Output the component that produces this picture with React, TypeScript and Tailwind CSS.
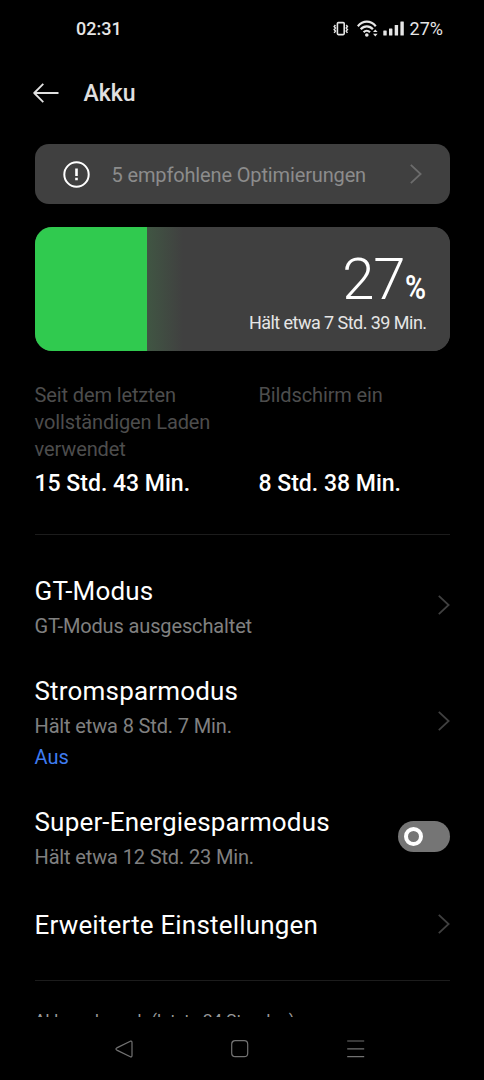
import type { ReactNode } from 'react';

interface ChevronProps {
  className?: string;
}

function Chevron({ className = '-mt-1 text-[#404040]' }: ChevronProps) {
  return (
    <svg className={`w-3 h-5 shrink-0 ${className}`} fill="none" stroke="currentColor" viewBox="0 0 12 20">
      <path strokeWidth={1.8} d="M0.8 0.9L10.6 10L0.8 19.1" />
    </svg>
  );
}

function StatusBar() {
  return (
    <div className="flex items-center justify-between h-[57px] pl-[76px] pr-[41px] text-[18px] font-medium text-[#e6e6e6] shrink-0">
      <span>02:31</span>
      <div className="flex items-center">
        {/* Vibration */}
        <svg className="w-4 h-4" fill="none" stroke="currentColor" viewBox="0 0 16 16">
          <rect x="4.4" y="1.6" width="6.8" height="12" rx="1" strokeWidth={1.6} />
          <path strokeWidth={1.5} d="M2.4 4L1.2 5.5L2.4 7L1.2 8.5L2.4 10L1.2 11.8M13.2 4L14.4 5.5L13.2 7L14.4 8.5L13.2 10L14.4 11.8" />
        </svg>
        {/* Wi-Fi */}
        <svg className="w-[22px] h-[18px] ml-2" fill="none" stroke="currentColor" viewBox="0 0 22 18">
          <path strokeWidth={2.2} d="M0.8 6.2C6 0.2 13.6 0.2 18.8 6.2M3.7 9.3C7.2 5.4 12.4 5.4 15.9 9.3M6.6 12.3C8.6 10.2 11 10.2 13 12.3" />
          <circle cx="9.8" cy="15" r="1.8" fill="currentColor" stroke="none" />
          <path fill="currentColor" stroke="none" d="M16 12L18.3 9.4L20.6 12ZM16 13.8L18.3 16.4L20.6 13.8Z" />
        </svg>
        {/* Signal */}
        <svg className="w-[22px] h-4 ml-1" fill="currentColor" viewBox="0 0 22 16">
          <rect x="0.3" y="9.5" width="3.4" height="5" rx="0.5" />
          <rect x="6" y="7.5" width="3.4" height="7" rx="0.5" />
          <rect x="11.7" y="4" width="3.4" height="10.5" rx="0.5" />
          <rect x="17.4" y="0.5" width="3.4" height="14" rx="0.5" />
        </svg>
        <span className="ml-[5px] font-normal">27%</span>
      </div>
    </div>
  );
}

interface UsageStatProps {
  label: string;
  value: string;
}

function UsageStat({ label, value }: UsageStatProps) {
  return (
    <div className="flex flex-col justify-between">
      <span className="text-[20px] leading-[27px] tracking-[-0.12px] text-[#4d4d4d]">{label}</span>
      <span className="mt-[6px] text-[23px] leading-[30px] font-medium text-white">{value}</span>
    </div>
  );
}

interface SettingRowProps {
  title: string;
  subtitle?: string;
  status?: string;
  children: ReactNode;
}

function SettingRow({ title, subtitle, status, children }: SettingRowProps) {
  return (
    <div className="flex items-center justify-between py-[17px]">
      <div className="flex flex-col">
        <span className="text-[26px] leading-[34px] tracking-[0.18px] text-white">{title}</span>
        {subtitle && <span className="mt-1 text-[20px] leading-7 tracking-[-0.14px] text-[#808080]">{subtitle}</span>}
        {status && <span className="mt-[3px] text-[20px] leading-7 text-[#3f7cf0]">{status}</span>}
      </div>
      {children}
    </div>
  );
}

function NavigationBar() {
  return (
    <div className="flex items-center justify-between h-[63px] pl-[115px] pr-[119px] text-[#727272] shrink-0">
      <svg className="w-[18px] h-[18px]" fill="none" stroke="currentColor" viewBox="0 0 18 18">
        <path strokeWidth={1.2} d="M15.3 1.2L1.8 7.9Q0 9 1.8 10.1L15.3 16.8Q17 17.3 17 15.5V2.5Q17 0.7 15.3 1.2Z" />
      </svg>
      <svg className="w-[18px] h-[18px]" fill="none" stroke="currentColor" viewBox="0 0 18 18">
        <rect x="0.7" y="0.7" width="16" height="16" rx="3.5" strokeWidth={1.2} />
      </svg>
      <svg className="w-[18px] h-[18px]" fill="none" stroke="currentColor" viewBox="0 0 18 18">
        <path strokeWidth={1.2} d="M0.2 1H17.2M0.2 8.8H17.2M0.2 16.6H17.2" />
      </svg>
    </div>
  );
}

export default function App() {
  return (
    <div className="flex flex-col w-[484px] h-[1080px] overflow-hidden bg-black font-['Roboto',sans-serif]">
      <StatusBar />

      {/* Header */}
      <div className="flex items-center h-[72px] pl-[33px] text-[#e0e0e0] shrink-0">
        <svg className="w-[26px] h-5" fill="none" stroke="currentColor" viewBox="0 0 26 20">
          <path strokeWidth={1.8} strokeLinejoin="round" d="M10.3 0.8L1.2 10L10.3 19.2M1.2 10H25.5" />
        </svg>
        <h1 className="ml-[24.5px] pt-[3px] text-[23px] font-medium">Akku</h1>
      </div>

      <div className="flex-1 min-h-0 overflow-hidden px-[34.5px] pt-[15px]">
        {/* Suggestions */}
        <div className="flex items-center h-[60px] pl-[28px] pr-7 rounded-[14px] bg-[#404040]">
          <svg className="w-[27px] h-[27px] text-white" fill="none" stroke="currentColor" viewBox="0 0 27 27">
            <circle cx="13.5" cy="13.5" r="12.2" strokeWidth={2} />
            <path strokeWidth={2.6} d="M13.5 7.5V15M13.5 16.8V19.3" />
          </svg>
          <span className="flex-1 ml-[22px] pt-[2px] text-[20px] tracking-[-0.14px] text-[#8c8c8c]">5 empfohlene Optimierungen</span>
          <Chevron className="text-[#6c6c6c]" />
        </div>

        {/* Battery level */}
        <div className="flex h-[124px] mt-[23px] rounded-[17px] bg-[#404040] overflow-hidden">
          <div className="w-[27%] bg-[#30ca4f]" />
          <div className="flex-1 flex flex-col items-end pr-[23px] pt-[22px] bg-linear-to-r from-[#405643] to-[#404040] to-[36px]">
            <div className="flex items-baseline text-white leading-[60px]">
              <span className="text-[58px] font-light tracking-[-1px]">27</span>
              <span className="w-[22px] flex justify-end text-[34px] font-semibold">
                <span className="origin-right scale-x-[0.84]">%</span>
              </span>
            </div>
            <span className="mt-[-6px] text-[18px] leading-6 tracking-[-0.54px] text-[#e6e6e6]">Hält etwa 7 Std. 39 Min.</span>
          </div>
        </div>

        {/* Usage since last charge */}
        <div className="grid grid-cols-[184px_1fr] gap-x-10 mt-[31px]">
          <UsageStat label="Seit dem letzten vollständigen Laden verwendet" value="15 Std. 43 Min." />
          <UsageStat label="Bildschirm ein" value="8 Std. 38 Min." />
        </div>

        <div className="mt-[35px] mb-[22px] h-px bg-[#1c1c1c]" />

        <SettingRow title="GT-Modus" subtitle="GT-Modus ausgeschaltet">
          <Chevron />
        </SettingRow>
        <SettingRow title="Stromsparmodus" subtitle="Hält etwa 8 Std. 7 Min." status="Aus">
          <Chevron />
        </SettingRow>
        <SettingRow title="Super-Energiesparmodus" subtitle="Hält etwa 12 Std. 23 Min.">
          <button className="flex items-center w-[52px] h-[31px] -mt-1 pl-[6px] rounded-full bg-[#757575]" role="switch" aria-checked={false}>
            <span className="w-[19px] h-[19px] rounded-full border-4 border-white" />
          </button>
        </SettingRow>
        <div className="mt-[3px]">
          <SettingRow title="Erweiterte Einstellungen">
            <Chevron className="-mt-0.5 text-[#404040]" />
          </SettingRow>
        </div>

        <div className="mt-[21px] h-px bg-[#1c1c1c]" />

        <p className="mt-[27px] text-[17px] leading-6 text-[#9a9a9a]">Akkuverbrauch (letzte 24 Stunden)</p>
      </div>

      <NavigationBar />
    </div>
  );
}
